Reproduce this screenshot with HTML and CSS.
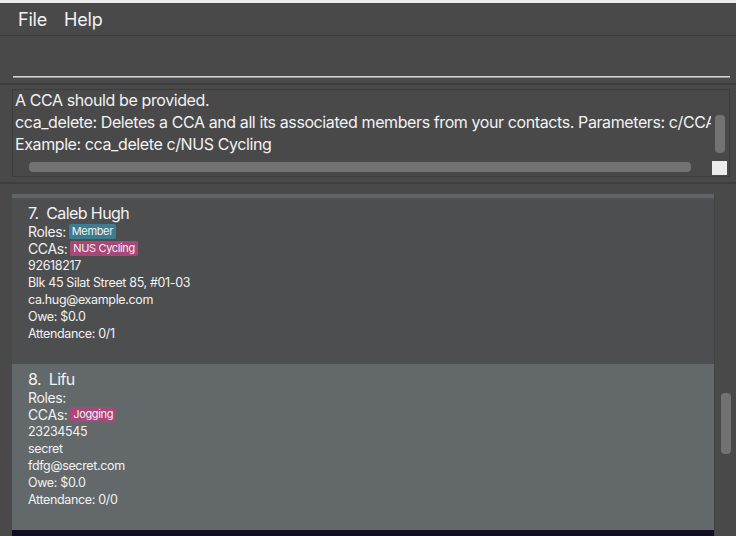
FILE: index.html
```html
<!DOCTYPE html>
<html>
<head>
<meta charset="utf-8">
<link rel="stylesheet" href="styles.css">
</head>
<body>
<div class="app">
  <div class="topline"></div>
  <div class="menubar">
    <span class="menu">File</span>
    <span class="menu">Help</span>
  </div>
  <div class="command">
    <div class="input"></div>
  </div>
  <div class="result-wrap">
    <div class="result">
      <div class="result-text">
        <div class="rline">A CCA should be provided.</div>
        <div class="rline">cca_delete: Deletes a CCA and all its associated members from your contacts. Parameters: c/CCA_NAME</div>
        <div class="rline">Example: cca_delete c/NUS Cycling</div>
      </div>
      <div class="vcol"><div class="vbar"></div></div>
      <div class="hrow"><div class="hbar"></div></div>
      <div class="corner"></div>
    </div>
  </div>
  <div class="list-wrap">
    <div class="list">
      <div class="strip"></div>
      <div class="card">
        <div class="name">7.&nbsp; Caleb Hugh</div>
        <div class="label">Roles: <span class="tag role">Member</span></div>
        <div class="label">CCAs: <span class="tag cca">NUS Cycling</span></div>
        <div class="field">92618217</div>
        <div class="field">Blk 45 Silat Street 85, #01-03</div>
        <div class="field">ca.hug@example.com</div>
        <div class="field">Owe: $0.0</div>
        <div class="field">Attendance: 0/1</div>
      </div>
      <div class="card selected">
        <div class="name">8.&nbsp; Lifu</div>
        <div class="label">Roles:</div>
        <div class="label">CCAs: <span class="tag cca">Jogging</span></div>
        <div class="field">23234545</div>
        <div class="field">secret</div>
        <div class="field">fdfg@secret.com</div>
        <div class="field">Owe: $0.0</div>
        <div class="field">Attendance: 0/0</div>
      </div>
      <div class="next"></div>
    </div>
    <div class="lscroll"><div class="lthumb"></div></div>
  </div>
</div>
</body>
</html>
```
FILE: styles.css
```css
html, body {
  margin: 0;
  padding: 0;
  background: #494949;
  width: 736px;
  height: 536px;
  overflow: hidden;
  font-family: Inter, "Open Sans", "Liberation Sans", sans-serif;
  color: #f2f2f2;
}
.app {
  display: flex;
  flex-direction: column;
  height: 536px;
}
.topline {
  height: 3px;
  background: #ececec;
}
.menubar {
  height: 32px;
  display: flex;
  align-items: center;
  gap: 17px;
  padding-left: 18px;
  border-bottom: 1px solid #3c3c3c;
  font-size: 18px;
  letter-spacing: -0.2px;
}
.command {
  height: 42px;
  display: flex;
  flex-direction: column;
  justify-content: flex-end;
  padding: 0 6px 5px 13px;
  border-bottom: 2px solid #3e3e3e;
}
.input {
  height: 1px;
  background: #d4d4d4;
  border-bottom: 1px solid #9a9a9a;
}
.result-wrap {
  padding: 4px 6px 5px 12px;
  border-bottom: 2px solid #3e3e3e;
}
.result {
  height: 86px;
  border: 1px solid #3c3c3c;
  display: grid;
  grid-template-columns: 1fr 18px;
  grid-template-rows: 69px 17px;
  overflow: hidden;
}
.result-text {
  margin-top: -1px;
  padding-left: 2px;
  font-size: 16px;
  line-height: 22px;
  letter-spacing: -0.4px;
  white-space: nowrap;
  overflow: hidden;
}
.vcol {
  display: flex;
  flex-direction: column;
  align-items: center;
  padding-top: 25px;
}
.vbar {
  width: 10px;
  height: 38px;
  border-radius: 4px;
  background: #727272;
}
.hrow {
  padding: 3px 0 0 16px;
}
.hbar {
  width: 662px;
  height: 10px;
  border-radius: 4px;
  background: #727272;
}
.corner {
  margin: 2px 2px 1px 1px;
  background: #ececec;
}
.list-wrap {
  flex: 1;
  display: flex;
  padding-left: 12px;
  padding-top: 10px;
  overflow: hidden;
}
.list {
  width: 703px;
  display: flex;
  flex-direction: column;
  border-right: 1px solid #444;
}
.strip {
  height: 4px;
  background: #5f6566;
}
.card {
  height: 166px;
  flex: none;
  box-sizing: border-box;
  padding: 6px 0 0 16px;
  background: #4d4e4f;
}
.card.selected {
  background: #63686a;
}
.next {
  flex: 1;
  background: #110e25;
}
.name {
  font-size: 16px;
  line-height: 19px;
  letter-spacing: -0.6px;
}
.label {
  font-size: 14px;
  line-height: 17px;
  letter-spacing: -0.4px;
  display: flex;
  align-items: center;
  gap: 3px;
}
.field {
  font-size: 12.5px;
  line-height: 17px;
  letter-spacing: -0.35px;
}
.tag {
  font-size: 11px;
  line-height: 15px;
  letter-spacing: -0.35px;
  padding: 0 3px;
  border-radius: 2px;
}
.tag.role {
  background: #3d7c91;
}
.tag.cca {
  background: #a84779;
}
.lscroll {
  width: 21px;
  display: flex;
  justify-content: center;
  padding-top: 199px;
}
.lthumb {
  width: 10px;
  height: 61px;
  border-radius: 4px;
  background: #727272;
}
```
